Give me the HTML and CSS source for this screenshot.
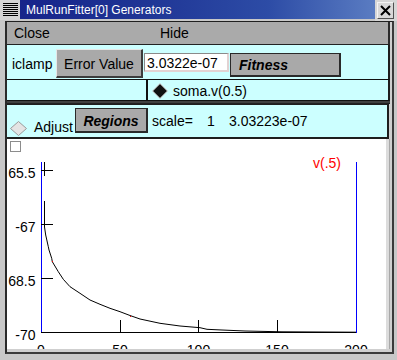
FILE: index.html
```html
<!DOCTYPE html>
<html>
<head>
<meta charset="utf-8">
<link rel="stylesheet" href="styles.css">
</head>
<body>
<div class="window">
  <div class="titlebar">
    <div class="winmenu">
      <svg width="20" height="20" viewBox="0 0 20 20">
        <g stroke="#000" stroke-width="1">
          <line x1="3" y1="3.5" x2="18" y2="3.5"/>
          <line x1="3" y1="5.5" x2="18" y2="5.5"/>
          <line x1="3" y1="7.5" x2="18" y2="7.5"/>
          <line x1="3" y1="9.5" x2="18" y2="9.5"/>
          <line x1="3" y1="11.5" x2="18" y2="11.5"/>
          <line x1="3" y1="13.5" x2="18" y2="13.5"/>
          <line x1="3" y1="15.5" x2="18" y2="15.5"/>
        </g>
      </svg>
    </div>
    <div class="title">MulRunFitter[0] Generators</div>
    <div class="closebox">
      <div class="closebtn">
        <svg width="13" height="13" viewBox="0 0 13 13">
          <path d="M2 2 L11 11 M11 2 L2 11" stroke="#000" stroke-width="2" fill="none"/>
        </svg>
      </div>
    </div>
  </div>
  <div class="frame">
    <div class="client">
      <div class="menubar">
        <span class="menu-item menu-close">Close</span>
        <span class="menu-item">Hide</span>
      </div>
      <div class="row row1">
        <span class="lbl-iclamp">iclamp</span>
        <div class="btn btn-err">Error Value</div>
        <div class="field">3.0322e-07</div>
        <div class="btn btn-fit">Fitness</div>
      </div>
      <div class="row row2">
        <div class="cell-empty"></div>
        <div class="cell-radio">
          <svg class="diamond-on" width="16" height="16" viewBox="0 0 16 16">
            <polygon points="8,0.5 15.5,8 8,15.5 0.5,8" fill="#111" stroke="#e0e0e0" stroke-width="1"/>
          </svg>
          <span class="radio-text">soma.v(0.5)</span>
        </div>
      </div>
      <div class="sep"></div>
      <div class="row row3">
        <svg class="diamond-off" width="17" height="15" viewBox="0 0 17 15">
          <polygon points="8.5,0.5 16.5,7.5 8.5,14.5 0.5,7.5" fill="#e4e4e4" stroke="#9a9a9a" stroke-width="1"/>
        </svg>
        <span class="lbl-adjust">Adjust</span>
        <div class="btn btn-reg">Regions</div>
        <span class="lbl-scale">scale=</span>
        <span class="lbl-one">1</span>
        <span class="lbl-val">3.03223e-07</span>
      </div>
      <div class="plot-wrap">
        <svg class="plot" width="379" height="210" viewBox="0 0 379 210">
          <g transform="translate(-7,-139)" font-family="Liberation Sans, Arial, sans-serif" font-size="14">
            <rect x="10.5" y="141.5" width="10" height="10" fill="#fff" stroke="#8c8c8c"/>
            <g shape-rendering="crispEdges">
              <line x1="41.5" y1="162" x2="41.5" y2="333" stroke="#0000ff"/>
              <line x1="356.5" y1="162" x2="356.5" y2="333" stroke="#0000ff"/>
              <line x1="41" y1="332.5" x2="356" y2="332.5" stroke="#000"/>
              <line x1="41" y1="170.5" x2="53" y2="170.5" stroke="#000"/>
              <line x1="41" y1="224.5" x2="53" y2="224.5" stroke="#000"/>
              <line x1="41" y1="278.5" x2="53" y2="278.5" stroke="#000"/>
              <line x1="120.5" y1="320" x2="120.5" y2="332" stroke="#000"/>
              <line x1="198.5" y1="320" x2="198.5" y2="332" stroke="#000"/>
              <line x1="277.5" y1="320" x2="277.5" y2="332" stroke="#000"/>
              <line x1="44.5" y1="162" x2="44.5" y2="176" stroke="#000"/>
            </g>
            <polyline fill="none" stroke="#000" stroke-width="1"
              points="44.5,201 44.5,227 45.7,235 48.3,246.7 49,250 51.7,258.3 52.3,261.7 58.3,271.7 63.3,279.3 70,286.7 80,293.3 90,300 100,304.3 110,308.3 120,311.7 130,315.5 140,319 160,323.3 180,326 200,327.7 207,329.3 222,330 245,331 282,331.8 356,332.2"/>
            <rect x="52" y="261" width="1" height="1" fill="#ff0000"/>
            <rect x="130" y="316" width="1" height="1" fill="#ff0000"/>
            <text x="35.5" y="178" text-anchor="end">65.5</text>
            <text x="35.5" y="232" text-anchor="end">-67</text>
            <text x="35.5" y="286" text-anchor="end">68.5</text>
            <text x="35.5" y="340" text-anchor="end">-70</text>
            <text x="41" y="355" text-anchor="middle">0</text>
            <text x="120" y="355" text-anchor="middle">50</text>
            <text x="198.5" y="355" text-anchor="middle">100</text>
            <text x="277" y="355" text-anchor="middle">150</text>
            <text x="356" y="355" text-anchor="middle">200</text>
            <text x="313" y="168" fill="#ff0000">v(.5)</text>
          </g>
        </svg>
        <div class="gutter"></div>
      </div>
    </div>
  </div>
</div>
</body>
</html>
```

FILE: styles.css
```css
* { box-sizing: border-box; }
html, body { margin: 0; padding: 0; }
body {
  width: 397px;
  height: 360px;
  overflow: hidden;
  background: #c8c8c8;
  font-family: "Liberation Sans", Arial, sans-serif;
  font-size: 14px;
  color: #000;
}
.window {
  width: 397px;
  height: 360px;
  display: flex;
  flex-direction: column;
}
.titlebar {
  height: 21px;
  display: flex;
  align-items: flex-start;
  background: #c8c8c8;
}
.winmenu {
  width: 20px;
  height: 20px;
  background: #d4d4d4;
}
.winmenu svg { display: block; }
.title {
  flex: 1;
  height: 19px;
  background: linear-gradient(to right, #17248a 0%, #1f3595 35%, #2d4ca6 70%, #5a7cc2 100%);
  color: #fff;
  font-size: 12px;
  line-height: 17px;
  padding: 2px 0 0 6px;
  white-space: nowrap;
}
.closebox {
  width: 22px;
  height: 21px;
  padding: 2px 3px 0 2px;
  background: #d6d6d6;
}
.closebtn {
  width: 17px;
  height: 17px;
  background: #d8d8d8;
  border: 1px solid;
  border-color: #f4f4f4 #505050 #505050 #f4f4f4;
  display: flex;
  align-items: center;
  justify-content: center;
}
.closebtn svg { display: block; }
.frame {
  flex: 1;
  display: flex;
  padding: 0 3px 6px 5px;
  background: #c8c8c8;
}
.client {
  flex: 1;
  display: flex;
  flex-direction: column;
  background: #cfcfcf;
  border-left: 2px solid #2a2a2a;
  border-top: 1px solid #202020;
  border-right: 2px solid #3a3a3a;
  border-bottom: 2px solid #3a3a3a;
}
.menubar {
  height: 23px;
  margin-right: 2px;
  background: #aaaaaa;
  border-right: 2px solid #2a2a2a;
  border-bottom: 1px solid #222;
  padding: 3px 0 0 7px;
  display: flex;
  line-height: 16px;
}
.menu-close { width: 146px; }
.row {
  background: #ccffff;
  margin-right: 2px;
  border-right: 2px solid #1e1e1e;
  display: flex;
  align-items: flex-start;
  line-height: 16px;
}
.row1 {
  height: 35px;
  border-bottom: 1px solid #111;
}
.lbl-iclamp {
  margin: 11px 0 0 5px;
  width: 44px;
}
.btn {
  background: #a9a9a9;
  border-style: solid;
  display: flex;
  align-items: center;
  white-space: nowrap;
}
.btn-err {
  margin-top: 4px;
  width: 87px;
  height: 29px;
  border-width: 1px 2px 2px 1px;
  border-color: #e6e6e6 #3c3c3c #3c3c3c #e6e6e6;
  justify-content: center;
  padding-top: 2px;
}
.field {
  margin: 8px 0 0 1px;
  width: 85px;
  height: 19px;
  background: #fff;
  border-style: solid;
  border-width: 1px 2px 2px 1px;
  border-color: #8a8a8a #e2d2d2 #e2d2d2 #8a8a8a;
  padding: 1px 0 0 2px;
}
.btn-fit {
  margin: 8px 0 0 1px;
  width: 111px;
  height: 24px;
  border-width: 1px 2px 2px 1px;
  border-color: #2a2a2a;
  padding: 1px 0 0 8px;
  font-weight: bold;
  font-style: italic;
}
.row2 {
  height: 21px;
  border-bottom: 1px solid #111;
}
.cell-empty {
  width: 141px;
  height: 20px;
  border-right: 2px solid #111;
}
.cell-radio {
  display: flex;
  align-items: flex-start;
  padding-left: 4px;
}
.diamond-on {
  display: block;
  margin-top: 3px;
}
.radio-text {
  margin: 3px 0 0 5px;
}
.sep {
  height: 3px;
  margin-right: 2px;
  background: #404040;
  border-bottom: 1px solid #222;
}
.row3 {
  height: 35px;
  margin-right: 3px;
  border-right: 2px solid #1e1e1e;
  border-bottom: 2px solid #1e1e1e;
  border-top: 1px solid #1e1e1e;
}
.diamond-off {
  display: block;
  margin: 16px 0 0 3px;
}
.lbl-adjust {
  margin: 14px 0 0 7px;
  width: 41px;
}
.btn-reg {
  margin: 3px 0 0 0;
  width: 73px;
  height: 25px;
  border-width: 1px 2px 2px 1px;
  border-color: #2a2a2a;
  justify-content: center;
  font-weight: bold;
  font-style: italic;
  padding-top: 1px;
}
.lbl-scale {
  margin: 8px 0 0 4px;
  width: 55px;
}
.lbl-one {
  margin-top: 8px;
  width: 22px;
}
.lbl-val {
  margin-top: 8px;
}
.plot-wrap {
  height: 210px;
  display: flex;
}
.plot {
  display: block;
  background: #fff;
}
.gutter {
  width: 4px;
  background: #dcdcdc;
  border-right: 1px solid #a8a8a8;
}
```
